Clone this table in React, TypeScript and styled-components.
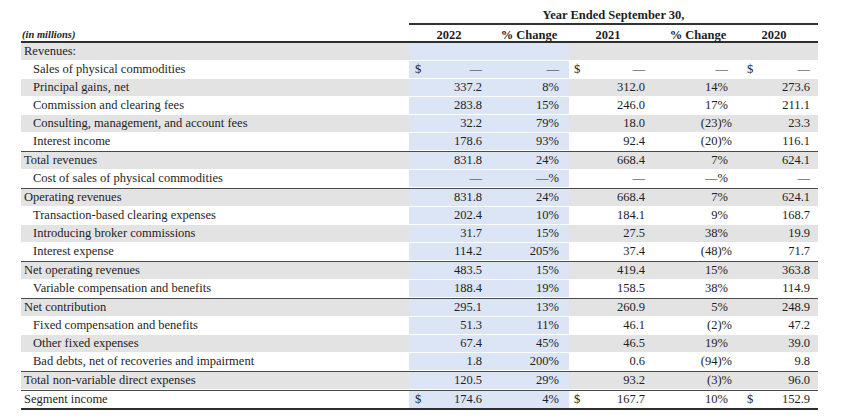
import React from 'react'
import styled, { createGlobalStyle } from 'styled-components'

type Line = {
  label: string
  indent?: boolean
  shade?: boolean
  rule?: boolean
  dollar?: boolean
  last?: boolean
  values: string[]
}

// label | 2022 | % | 2021 | % | 2020
const COLS = '388px 80px 80px 78px 97px 74px'

const columns = [
  { blue: true, pl: 6, pr: 7, money: true },
  { blue: true, pl: 0, pr: 10, money: false },
  { blue: false, pl: 5, pr: 2, money: true },
  { blue: false, pl: 0, pr: 16, money: false },
  { blue: false, pl: 3, pr: 8, money: true },
]

const headers = [
  { text: '2022', pl: 0, pr: 0 },
  { text: '% Change', pl: 0, pr: 0 },
  { text: '2021', pl: 0, pr: 0 },
  { text: '% Change', pl: 5, pr: 0 },
  { text: '2020', pl: 0, pr: 14 },
]

const lines: Line[] = [
  { label: 'Revenues:', shade: true, values: ['', '', '', '', ''] },
  { label: 'Sales of physical commodities', indent: true, dollar: true, values: ['—', '—', '—', '—', '—'] },
  { label: 'Principal gains, net', indent: true, shade: true, values: ['337.2', '8%', '312.0', '14%', '273.6'] },
  { label: 'Commission and clearing fees', indent: true, values: ['283.8', '15%', '246.0', '17%', '211.1'] },
  { label: 'Consulting, management, and account fees', indent: true, shade: true, values: ['32.2', '79%', '18.0', '(23)%', '23.3'] },
  { label: 'Interest income', indent: true, values: ['178.6', '93%', '92.4', '(20)%', '116.1'] },
  { label: 'Total revenues', shade: true, rule: true, values: ['831.8', '24%', '668.4', '7%', '624.1'] },
  { label: 'Cost of sales of physical commodities', indent: true, values: ['—', '—%', '—', '—%', '—'] },
  { label: 'Operating revenues', shade: true, rule: true, values: ['831.8', '24%', '668.4', '7%', '624.1'] },
  { label: 'Transaction-based clearing expenses', indent: true, values: ['202.4', '10%', '184.1', '9%', '168.7'] },
  { label: 'Introducing broker commissions', indent: true, shade: true, values: ['31.7', '15%', '27.5', '38%', '19.9'] },
  { label: 'Interest expense', indent: true, values: ['114.2', '205%', '37.4', '(48)%', '71.7'] },
  { label: 'Net operating revenues', shade: true, rule: true, values: ['483.5', '15%', '419.4', '15%', '363.8'] },
  { label: 'Variable compensation and benefits', indent: true, values: ['188.4', '19%', '158.5', '38%', '114.9'] },
  { label: 'Net contribution', shade: true, rule: true, values: ['295.1', '13%', '260.9', '5%', '248.9'] },
  { label: 'Fixed compensation and benefits', indent: true, values: ['51.3', '11%', '46.1', '(2)%', '47.2'] },
  { label: 'Other fixed expenses', indent: true, shade: true, values: ['67.4', '45%', '46.5', '19%', '39.0'] },
  { label: 'Bad debts, net of recoveries and impairment', indent: true, values: ['1.8', '200%', '0.6', '(94)%', '9.8'] },
  { label: 'Total non-variable direct expenses', shade: true, rule: true, values: ['120.5', '29%', '93.2', '(3)%', '96.0'] },
  { label: 'Segment income', rule: true, dollar: true, last: true, values: ['174.6', '4%', '167.7', '10%', '152.9'] },
]

const App = () => {
  return (
    <>
      <GlobalStyle />
      <Sheet>
        <TitleRow>
          <Title>Year Ended September 30,</Title>
        </TitleRow>
        <HeadRow>
          <Units>(in millions)</Units>
          {headers.map((h, i) => (
            <HeadCell key={`head_${i}`} $pl={h.pl} $pr={h.pr}>{h.text}</HeadCell>
          ))}
        </HeadRow>
        {lines.map((line, li) => (
          <Row key={`line_${li}`} $shade={line.shade} $rule={line.rule} $last={line.last}>
            <Label $indent={line.indent}>{line.label}</Label>
            {line.values.map((v, vi) => {
              const col = columns[vi]
              const showDollar = !!line.dollar && col.money
              return (
                <Value key={`v_${li}_${vi}`} $blue={col.blue} $pl={col.pl} $pr={col.pr} $dollar={showDollar}>
                  {showDollar && <span>$</span>}
                  {v.startsWith('(') ? <Hang>{v}</Hang> : <span>{v}</span>}
                </Value>
              )
            })}
          </Row>
        ))}
      </Sheet>
    </>
  )
}

const GlobalStyle = createGlobalStyle`
  html, body {
    margin: 0;
    padding: 0;
    background: #fff;
  }
  body {
    font-family: "Liberation Serif", "Times New Roman", serif;
    color: #1e1e1e;
  }
`

const Sheet = styled.div`
  width: 797px;
  margin-left: 21px;
  padding-top: 9px;
  font-size: 12.5px;
`

const TitleRow = styled.div`
  display: grid;
  grid-template-columns: ${COLS};
`

const Title = styled.div`
  grid-column: 2 / 7;
  text-align: center;
  font-weight: 700;
  line-height: 12px;
  padding-bottom: 2px;
  border-bottom: 2px solid #333;
`

const HeadRow = styled.div`
  display: grid;
  grid-template-columns: ${COLS};
  padding-top: 4px;
  line-height: 12px;
  border-bottom: 2px solid #2e2e2e;
`

const Units = styled.div`
  font-style: italic;
  font-weight: 700;
  font-size: 10.5px;
  padding-left: 1px;
`

const HeadCell = styled.div<{ $pl: number; $pr: number }>`
  text-align: center;
  font-weight: 700;
  padding-left: ${({ $pl }) => $pl}px;
  padding-right: ${({ $pr }) => $pr}px;
`

const Row = styled.div<{ $shade?: boolean; $rule?: boolean; $last?: boolean }>`
  display: grid;
  grid-template-columns: ${COLS};
  height: 17px;
  line-height: 17px;
  background: ${({ $shade }) => ($shade ? '#e3e3e3' : '#fff')};
  border-top: ${({ $rule }) => ($rule ? '1px solid #4a4a4a' : 'none')};
  border-bottom: ${({ $last }) => ($last ? '2px solid #2e2e2e' : '1px solid #fff')};
`

const Label = styled.div<{ $indent?: boolean }>`
  padding-left: ${({ $indent }) => ($indent ? 12 : 3)}px;
  white-space: nowrap;
`

const Value = styled.div<{ $blue: boolean; $pl: number; $pr: number; $dollar: boolean }>`
  display: flex;
  justify-content: ${({ $dollar }) => ($dollar ? 'space-between' : 'flex-end')};
  padding-left: ${({ $pl }) => $pl}px;
  padding-right: ${({ $pr }) => $pr}px;
  background: ${({ $blue }) => ($blue ? '#dce5f5' : 'transparent')};
  white-space: nowrap;
`

const Hang = styled.span`
  margin-right: -4px;
`

export default App
